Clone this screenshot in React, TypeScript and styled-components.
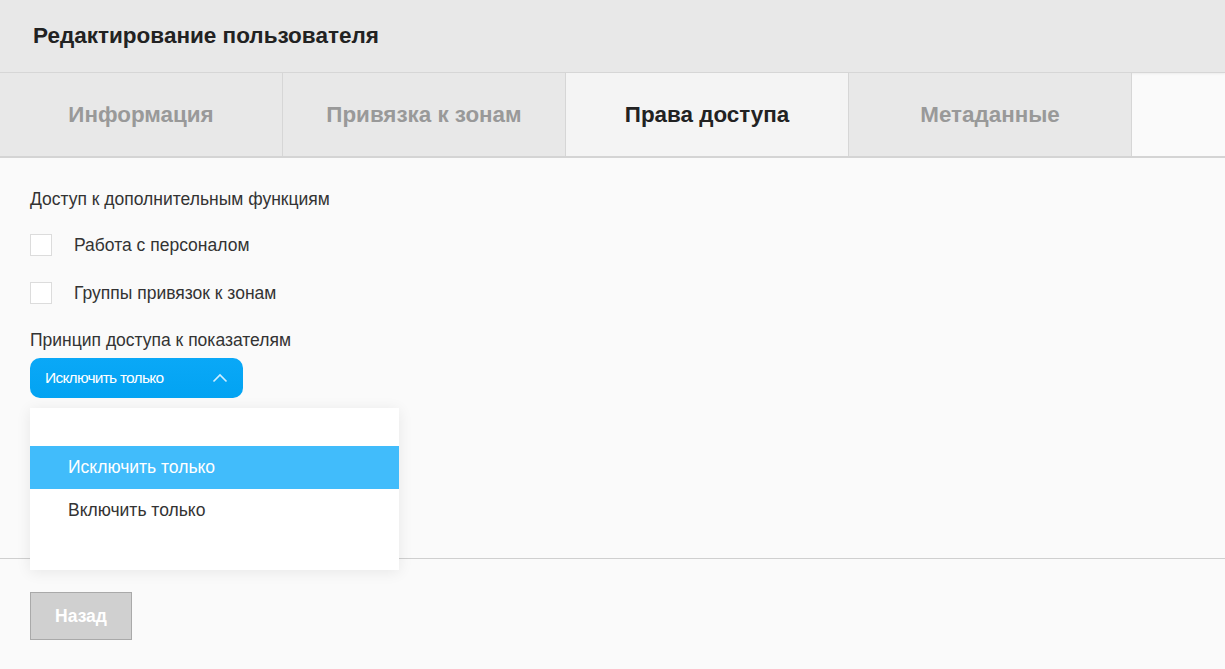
import React from "react";
import styled, { createGlobalStyle } from "styled-components";

const Global = createGlobalStyle`
  html, body { margin: 0; padding: 0; background: #fafafa; }
  body { font-family: "Liberation Sans", Arial, sans-serif; }
  * { box-sizing: border-box; }
`;

const Page = styled.div`
  width: 1225px;
  height: 669px;
  background: #fafafa;
  display: flex;
  flex-direction: column;
  overflow: hidden;
  & > * { flex: none; }
`;

const Header = styled.div`
  height: 73px;
  background: #e8e8e8;
  border-bottom: 1px solid #d6d6d6;
  box-shadow: 0 1px 2px rgba(0,0,0,0.06);
  display: flex;
  align-items: center;
  padding-left: 33px;
`;

const Title = styled.h1`
  margin: 0;
  font-size: 22.5px;
  font-weight: bold;
  color: #222;
`;

const Tabs = styled.div`
  display: flex;
  height: 85px;
  border-bottom: 2px solid #d4d4d4;
`;

const Tab = styled.div<{ $active?: boolean }>`
  width: 283px;
  display: flex;
  align-items: center;
  justify-content: center;
  background: ${(p) => (p.$active ? "#f4f4f4" : "#e8e8e8")};
  color: ${(p) => (p.$active ? "#222" : "#999")};
  border-right: 1px solid #d6d6d6;
  font-size: 22.4px;
  font-weight: bold;
`;

const Content = styled.div`
  position: relative;
  padding: 31px 30px 0;
  height: 401px;
  border-bottom: 1px solid #cfcfcf;
`;

const Label = styled.div`
  font-size: 17.5px;
  color: #333;
  line-height: 20px;
`;

const CheckRow = styled.label`
  display: flex;
  align-items: center;
  gap: 22px;
  margin-top: 25px;
  font-size: 17.5px;
  color: #333;
  line-height: 22px;
  & + & { margin-top: 26px; }
`;

const Box = styled.span`
  width: 22px;
  height: 22px;
  background: #fff;
  border: 1px solid #dcdcdc;
  flex: none;
`;

const SectionLabel = styled(Label)`
  margin-top: 26px;
`;

const SelectButton = styled.div`
  margin-top: 8px;
  width: 213px;
  height: 40px;
  border-radius: 10px;
  background: linear-gradient(#0aa8f7, #02a3f2);
  display: flex;
  align-items: center;
  justify-content: space-between;
  padding: 0 15px 0 15px;
  color: #fff;
  font-size: 15.5px;
  letter-spacing: -0.75px;
`;

const Menu = styled.div`
  position: absolute;
  left: 30px;
  top: 250px;
  width: 369px;
  height: 162px;
  background: #fff;
  box-shadow: 0 2px 14px rgba(0,0,0,0.08);
  padding-top: 38px;
`;

const MenuItem = styled.div<{ $selected?: boolean }>`
  height: 43px;
  display: flex;
  align-items: center;
  padding-left: 38px;
  font-size: 17.5px;
  background: ${(p) => (p.$selected ? "#41bcfb" : "transparent")};
  color: ${(p) => (p.$selected ? "#fff" : "#333")};
`;

const Footer = styled.div`
  padding: 33px 30px;
`;

const BackButton = styled.button`
  width: 102px;
  height: 48px;
  background: #d0d0d0;
  border: 1px solid #a9a9a9;
  color: #fff;
  font-family: "Liberation Sans", Arial, sans-serif;
  font-size: 17.5px;
  font-weight: bold;
  padding: 0;
`;

export default function App() {
  return (
    <Page>
      <Global />
      <Header>
        <Title>Редактирование пользователя</Title>
      </Header>
      <Tabs>
        <Tab>Информация</Tab>
        <Tab>Привязка к зонам</Tab>
        <Tab $active>Права доступа</Tab>
        <Tab>Метаданные</Tab>
      </Tabs>
      <Content>
        <Label>Доступ к дополнительным функциям</Label>
        <CheckRow>
          <Box />
          Работа с персоналом
        </CheckRow>
        <CheckRow>
          <Box />
          Группы привязок к зонам
        </CheckRow>
        <SectionLabel>Принцип доступа к показателям</SectionLabel>
        <SelectButton>
          <span>Исключить только</span>
          <svg width="16" height="10" viewBox="0 0 16 10">
            <path d="M1.5 8.5 L8 2 L14.5 8.5" fill="none" stroke="#cfeeff" strokeWidth="1.6" />
          </svg>
        </SelectButton>
        <Menu>
          <MenuItem $selected>Исключить только</MenuItem>
          <MenuItem>Включить только</MenuItem>
        </Menu>
      </Content>
      <Footer>
        <BackButton>Назад</BackButton>
      </Footer>
    </Page>
  );
}
